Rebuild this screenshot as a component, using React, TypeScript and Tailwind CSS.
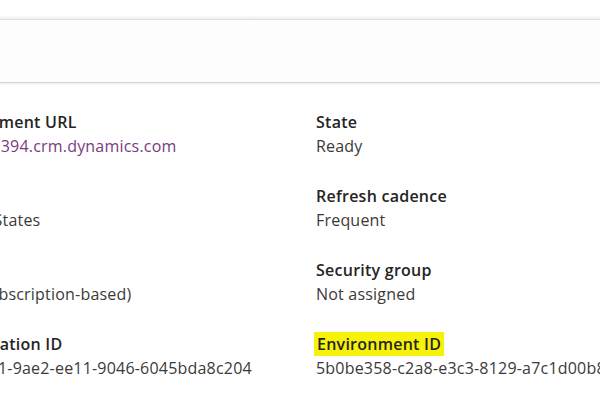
import type { ReactNode } from "react";

type Field = { label: ReactNode; value: ReactNode };

const leftFields: Field[] = [
  {
    label: "Environment URL",
    value: <span className="text-[#7a3a82]">org4e19394.crm.dynamics.com</span>,
  },
  { label: "Region", value: "United States" },
  { label: "Type", value: "Trial (subscription-based)" },
  { label: "Organization ID", value: "3f1c0a71-9ae2-ee11-9046-6045bda8c204" },
];

const rightFields: Field[] = [
  { label: "State", value: "Ready" },
  { label: "Refresh cadence", value: "Frequent" },
  { label: "Security group", value: "Not assigned" },
  {
    label: <span className="-mx-[2px] bg-[#f7f20a] px-[3px] py-[1px]">Environment ID</span>,
    value: "5b0be358-c2a8-e3c3-8129-a7c1d00b8e41",
  },
];

function FieldList({ fields }: { fields: Field[] }) {
  return (
    <div className="flex flex-col gap-[26px]">
      {fields.map((f, i) => (
        <div key={i} className="flex flex-col">
          <div className="text-[16px] leading-[24px] font-semibold tracking-[0.25px] text-[#252423]">
            {f.label}
          </div>
          <div className="text-[16px] leading-[24px] tracking-[0.2px] text-[#3b3a39]">{f.value}</div>
        </div>
      ))}
    </div>
  );
}

export default function App() {
  return (
    <div
      className="h-[403px] w-[600px] overflow-hidden bg-white whitespace-nowrap"
      style={{ fontFamily: '"Open Sans", "Noto Sans", sans-serif' }}
    >
      {/* header strip */}
      <div className="h-[15px] bg-white" />
      <div className="h-[4px] bg-gradient-to-b from-white to-[#ededed]" />
      <div className="h-[63px] border-t border-[#e0e0e0] bg-[#fdfdfd]" />
      <div className="h-[3px] border-t border-[#d4d4d4] bg-gradient-to-b from-[#ececec] to-white" />

      {/* details grid */}
      <div className="-ml-[62px] flex pt-[25px]">
        <div className="w-[378px] shrink-0">
          <FieldList fields={leftFields} />
        </div>
        <div className="flex-1">
          <FieldList fields={rightFields} />
        </div>
      </div>
    </div>
  );
}
